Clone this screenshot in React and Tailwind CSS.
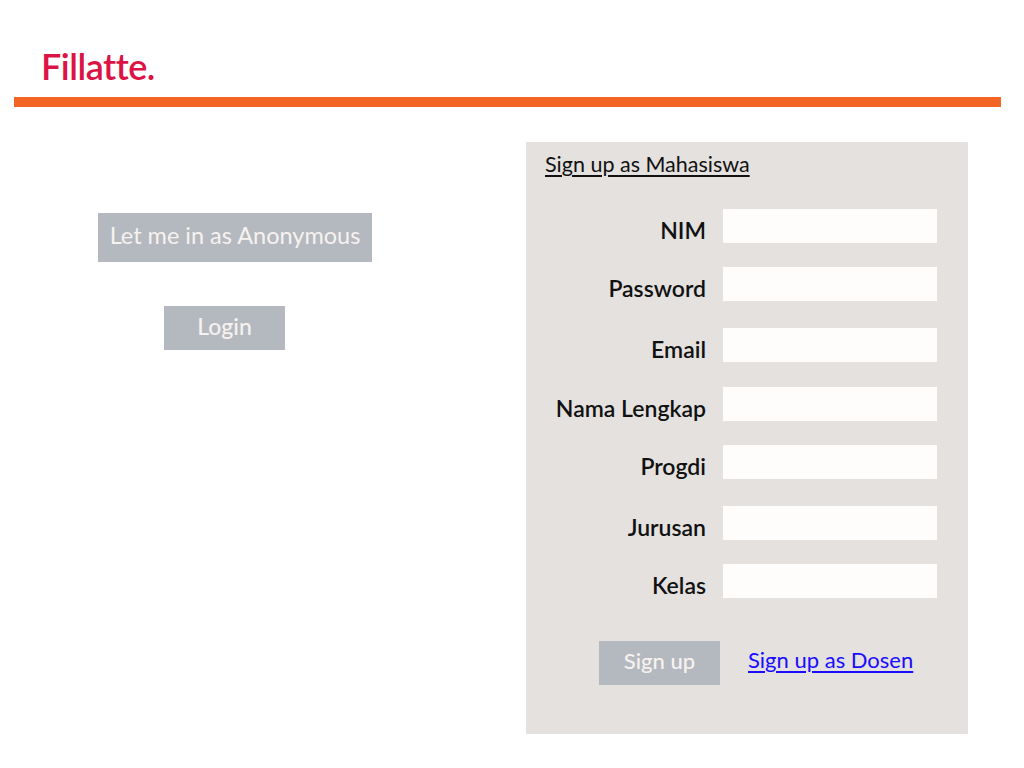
const fields = [
  { label: "NIM", mt: "mt-0" },
  { label: "Password", mt: "mt-[24px]" },
  { label: "Email", mt: "mt-[27px]" },
  { label: "Nama Lengkap", mt: "mt-[25px]" },
  { label: "Progdi", mt: "mt-[24px]" },
  { label: "Jurusan", mt: "mt-[27px]" },
  { label: "Kelas", mt: "mt-[24px]" },
];

export default function App() {
  return (
    <div className="min-h-[768px] bg-white font-['Lato','Open_Sans',sans-serif] text-[#111]">
      <header className="pt-[46px] px-[14px]">
        <h1 className="pl-[27px] text-[36px] leading-[40px] font-semibold text-[#dc1446] tracking-[-0.5px]">
          Fillatte.
        </h1>
        <div className="mt-[11px] h-[10px] w-[987px] bg-[#f26522]" />
      </header>

      <main className="flex pt-[35px]">
        <div className="w-[526px] flex flex-col pt-[71px]">
          <button className="ml-[98px] w-[274px] h-[49px] bg-[#b4b9bf] text-[#f7f2ef] text-[23.5px] leading-none pb-[4px]">
            Let me in as Anonymous
          </button>
          <button className="ml-[164px] mt-[44px] w-[121px] h-[44px] bg-[#b4b9bf] text-[#f7f2ef] text-[23px] font-medium leading-none pb-[4px]">
            Login
          </button>
        </div>

        <section className="w-[442px] h-[592px] bg-[#e4e1df] px-[19px] pt-[9px]">
          <a href="#" className="text-[21.5px] leading-[26px] underline underline-offset-[3px] text-[#111]">
            Sign up as Mahasiswa
          </a>
          <div className="mt-[31px] flex flex-col">
            {fields.map((f) => (
              <div key={f.label} className={`flex items-end ${f.mt}`}>
                <label className="w-[161px] mb-[-1px] text-right text-[23px] font-semibold leading-[28px]">
                  {f.label}
                </label>
                <input className="ml-[17px] w-[214px] h-[34px] bg-[#fefdfc] outline-none" />
              </div>
            ))}
          </div>
          <div className="mt-[43px] flex items-center">
            <button className="ml-[54px] w-[121px] h-[44px] bg-[#b4b9bf] text-[#f7f2ef] text-[22px] font-medium leading-none pb-[4px]">
              Sign up
            </button>
            <a href="#" className="ml-[28px] mb-[6px] text-[22px] leading-[28px] text-[#1a0dff] underline underline-offset-[3px]">
              Sign up as Dosen
            </a>
          </div>
        </section>
      </main>
    </div>
  );
}
